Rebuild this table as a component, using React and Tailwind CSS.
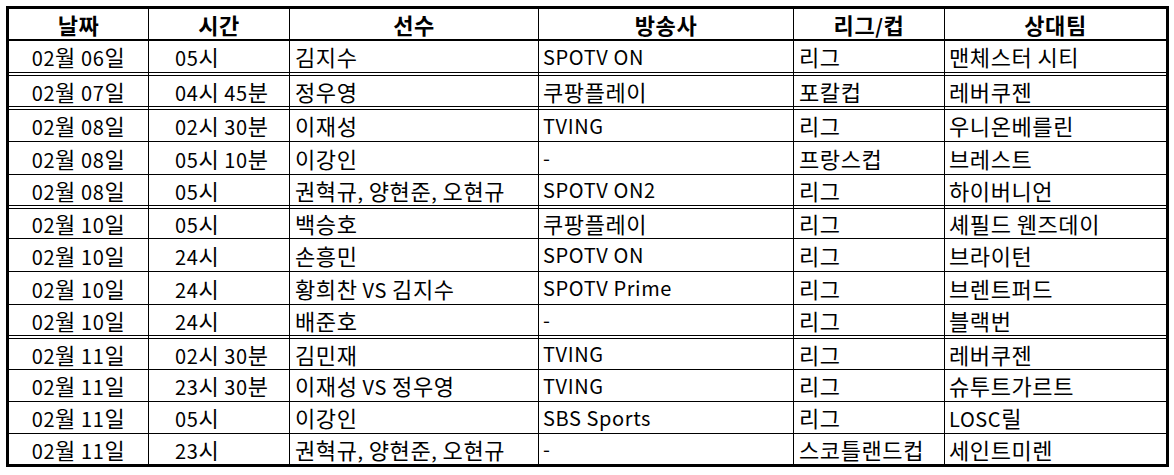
import React from 'react';

const columns = [
  { label: '날짜', cell: 'justify-center' },
  { label: '시간', cell: 'pl-[26px] border-l border-black' },
  { label: '선수', cell: 'pl-[5px] border-l border-black' },
  { label: '방송사', cell: 'pl-[4px] border-l border-black' },
  { label: '리그/컵', cell: 'pl-[5px] border-l border-black' },
  { label: '상대팀', cell: 'pl-[4px] border-l border-black' },
];

// sep: how the row is closed off underneath
const rows = [
  { h: 'h-[31px]', sep: 'double', data: ['02월 06일', '05시', '김지수', 'SPOTV ON', '리그', '맨체스터 시티'] },
  { h: 'h-[30px]', sep: 'double', data: ['02월 07일', '04시 45분', '정우영', '쿠팡플레이', '포칼컵', '레버쿠젠'] },
  { h: 'h-[31px]', sep: 'single', data: ['02월 08일', '02시 30분', '이재성', 'TVING', '리그', '우니온베를린'] },
  { h: 'h-[32px]', sep: 'single', data: ['02월 08일', '05시 10분', '이강인', '-', '프랑스컵', '브레스트'] },
  { h: 'h-[30px]', sep: 'double', data: ['02월 08일', '05시', '권혁규, 양현준, 오현규', 'SPOTV ON2', '리그', '하이버니언'] },
  { h: 'h-[29px]', sep: 'single', data: ['02월 10일', '05시', '백승호', '쿠팡플레이', '리그', '셰필드 웬즈데이'] },
  { h: 'h-[32px]', sep: 'single', data: ['02월 10일', '24시', '손흥민', 'SPOTV ON', '리그', '브라이턴'] },
  { h: 'h-[32px]', sep: 'single', data: ['02월 10일', '24시', '황희찬 VS 김지수', 'SPOTV Prime', '리그', '브렌트퍼드'] },
  { h: 'h-[30px]', sep: 'double', data: ['02월 10일', '24시', '배준호', '-', '리그', '블랙번'] },
  { h: 'h-[30px]', sep: 'single', data: ['02월 11일', '02시 30분', '김민재', 'TVING', '리그', '레버쿠젠'] },
  { h: 'h-[31px]', sep: 'single', data: ['02월 11일', '23시 30분', '이재성 VS 정우영', 'TVING', '리그', '슈투트가르트'] },
  { h: 'h-[31px]', sep: 'single', data: ['02월 11일', '05시', '이강인', 'SBS Sports', '리그', 'LOSC릴'] },
  { h: 'h-[30px]', sep: 'none', data: ['02월 11일', '23시', '권혁규, 양현준, 오현규', '-', '스코틀랜드컵', '세인트미렌'] },
];

const gridCols = 'grid grid-cols-[139px_141px_249px_255px_151px_222px]';

// hangul in the sheet font sits larger than Noto's, so those runs get a bigger size
function Spaced({ text }) {
  return text.split(/([가-힣]+)/).map((part, i) =>
    /[가-힣]/.test(part) ? (
      <span key={i} className="text-[22px] tracking-[0.6px]">{part}</span>
    ) : (
      <span key={i} className="tracking-[0.6px]">{part}</span>
    )
  );
}

function Separator({ kind }) {
  if (kind === 'none') return null;
  if (kind === 'single') return <div className="h-px bg-black" />;
  return (
    <div className="flex flex-col">
      <div className="h-px bg-black" />
      <div className={`${gridCols} h-[2px]`}>
        {columns.map((c, i) => (
          <div key={i} className={i === 0 ? '' : 'border-l border-black'} />
        ))}
      </div>
      <div className="h-px bg-black" />
    </div>
  );
}

export default function App() {
  return (
    <div className="w-[1174px] h-[475px] bg-white pt-[6px] pl-[6px] text-black font-['Noto_Sans_CJK_KR',sans-serif]">
      <div className="w-[1163px] border-[3px] border-black">
        <div className={`${gridCols} h-[32px] border-b-2 border-black`}>
          {columns.map((c, i) => (
            <div
              key={c.label}
              className={`flex items-center justify-center text-[20px] leading-none font-bold ${i === 0 ? '' : 'border-l border-black'}`}
            >
              <span>
                <Spaced text={c.label} />
              </span>
            </div>
          ))}
        </div>
        {rows.map((row, r) => (
          <div key={r}>
            <div className={`${gridCols} ${row.h}`}>
              {row.data.map((text, i) => (
                <div
                  key={i}
                  className={`flex items-center whitespace-nowrap text-[20px] leading-none ${columns[i].cell}`}
                >
                  <span>
                    <Spaced text={text} />
                  </span>
                </div>
              ))}
            </div>
            <Separator kind={row.sep} />
          </div>
        ))}
      </div>
    </div>
  );
}
